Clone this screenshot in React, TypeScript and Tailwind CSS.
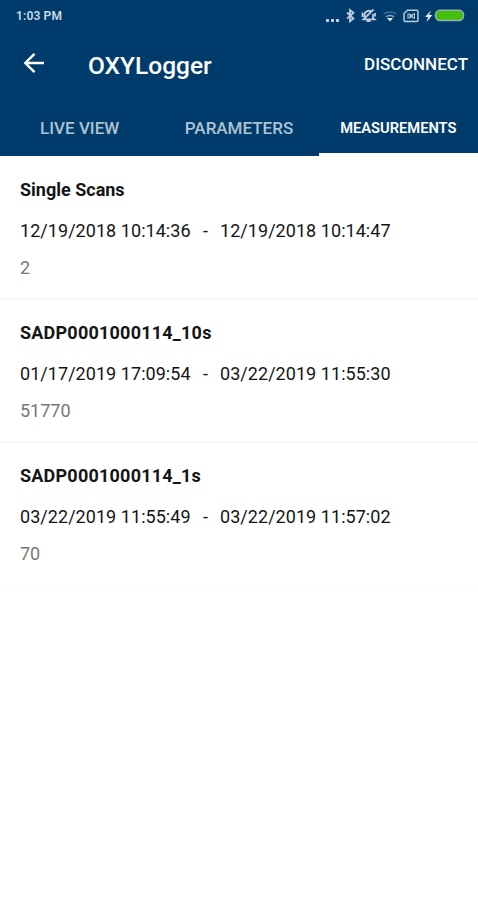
import React, { useState } from "react";

interface Measurement {
  name: string;
  start: string;
  end: string;
  count: number;
  spacing?: string;
}

const measurements: Measurement[] = [
  { name: "Single Scans", start: "12/19/2018 10:14:36", end: "12/19/2018 10:14:47", count: 2 },
  { name: "SADP0001000114_10s", start: "01/17/2019 17:09:54", end: "03/22/2019 11:55:30", count: 51770, spacing: "tracking-[0.22px]" },
  { name: "SADP0001000114_1s", start: "03/22/2019 11:55:49", end: "03/22/2019 11:57:02", count: 70, spacing: "tracking-[0.22px]" },
];

const tabs = [
  { label: "LIVE VIEW", text: "text-[17px]" },
  { label: "PARAMETERS", text: "text-[17px]" },
  { label: "MEASUREMENTS", text: "text-[14.7px]" },
];

const StatusIcons = () => (
  <svg width="142" height="20" viewBox="0 0 142 20" fill="none" stroke="#b9cbe0" strokeWidth="1.5">
    {/* more */}
    <g fill="#c9d6e6" stroke="none">
      <rect x="1" y="13" width="3" height="3" rx="0.8" />
      <rect x="6" y="13" width="3" height="3" rx="0.8" />
      <rect x="11" y="13" width="3" height="3" rx="0.8" />
    </g>
    {/* bluetooth */}
    <path d="M22 6.500l6.500 6-3.500 2.800V4l3.500 2.700-6.500 6" strokeWidth="1.800" />
    {/* muted bell */}
    <path d="M39.500 12V8.500a4.300 4.300 0 0 1 7-2.700M48 8v4l1.500 1.300H38.500L48.500 3.500M41.500 15h4M37.500 6.500v4.500M50 7v3.500" strokeWidth="1.800" />
    {/* wifi */}
    <path d="M58.500 8.200q6.500-4.500 13 0" stroke="#416d98" />
    <path d="M61 10.800q4-2.600 8 0" stroke="#84a5c4" />
    <path d="M62 12h6l-3 3.500z" fill="#e2eaf3" stroke="none" />
    {/* no sim */}
    <path d="M82.500 4.300h9q1.500 0 1.500 1.500v8.200q0 1.500-1.500 1.500h-11q-1.500 0-1.500-1.500V7.500z" />
    <path d="M84 7.800l4.500 4.500M88.500 7.800L84 12.300" strokeWidth="1.600" />
    <path d="M83 7.300v5.400M89.500 7.300v5.400" strokeWidth="1" />
    {/* charging battery */}
    <path d="M106 4.500l-6 6.500h3l-1.500 5 6-7h-3.300z" fill="#e2eaf3" stroke="none" />
    <rect x="110.500" y="4.300" width="28" height="10.200" rx="4.500" fill="#43c108" stroke="#94aebb" strokeWidth="1.500" />
  </svg>
);

const App = () => {
  const [activeTab, setActiveTab] = useState(2);

  return (
    <main className="min-h-screen w-full bg-white font-['Roboto',sans-serif] text-[#151515]">
      <header className="flex h-[156px] flex-col bg-[#003c6b] text-white">
        <div className="flex h-[31px] items-center justify-between pr-[11px] pl-4">
          <span className="text-[12px] leading-4 font-semibold tracking-[0.15px] text-[#ccd8e5]">1:03 PM</span>
          <StatusIcons />
        </div>

        <div className="flex h-[68px] items-center pr-[10px] pl-[23px]">
          <button aria-label="Back" className="mb-1">
            <svg width="22" height="22" viewBox="0 0 22 22" fill="none" stroke="white" strokeWidth="2.4">
              <path d="M21 11H2.500M11.500 1.800L2.300 11l9.200 9.200" />
            </svg>
          </button>
          <h1 className="mt-[2px] ml-[43px] text-[24.5px] leading-8 font-medium">OXYLogger</h1>
          <button className="mb-[2px] ml-auto text-[17px] leading-6 font-medium">DISCONNECT</button>
        </div>

        <nav className="grid flex-1 grid-cols-3">
          {tabs.map((tab, index) => (
            <button
              key={tab.label}
              onClick={() => setActiveTab(index)}
              className={`flex items-center justify-center border-b-[3px] pt-[5px] ${tab.text} ${
                index === activeTab
                  ? "border-white font-semibold text-white"
                  : "border-transparent font-medium text-[#afc2d4]"
              }`}
            >
              {tab.label}
            </button>
          ))}
        </nav>
      </header>

      <ul className="pt-px">
        {measurements.map((item) => (
          <li
            key={item.name}
            className="h-[143.2px] border-b-2 border-[#f7f7f7] pt-5 pl-5 last:border-[#fdfdfd]"
          >
            <h2 className={`text-[18px] leading-[25px] font-bold ${item.spacing ?? ""}`}>{item.name}</h2>
            <p className="mt-[17px] flex text-[18px] leading-6 tracking-[0.05px]">
              <span className="w-[183px]">{item.start}</span>
              <span className="w-[17px]">-</span>
              <span>{item.end}</span>
            </p>
            <p className="mt-[13px] text-[18px] leading-6 text-[#777777]">{item.count}</p>
          </li>
        ))}
      </ul>
    </main>
  );
};

export default App;
